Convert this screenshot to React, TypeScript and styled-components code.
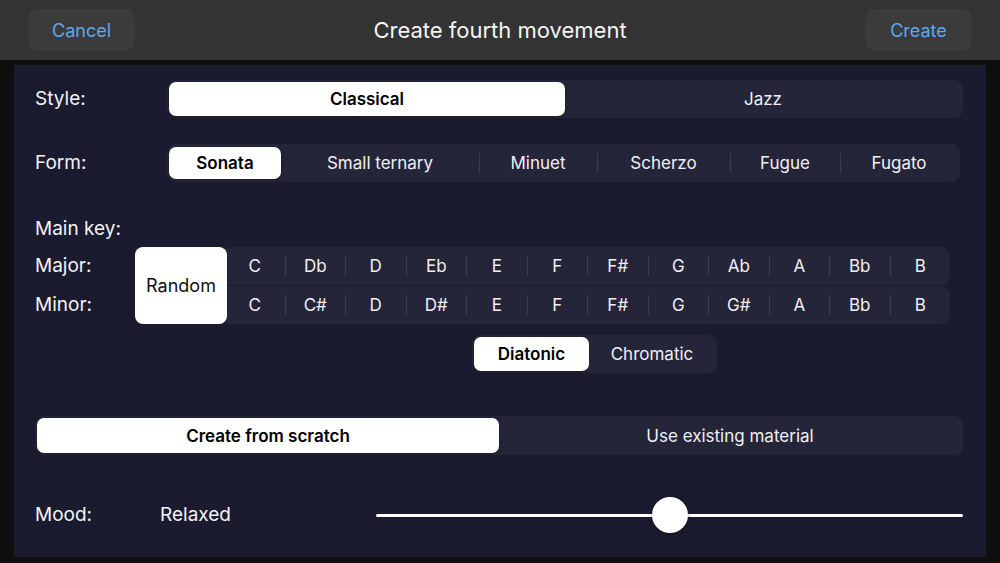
import React from 'react';
import styled, { createGlobalStyle } from 'styled-components';

const GlobalStyle = createGlobalStyle`
  html, body {
    margin: 0;
    padding: 0;
    background: #0e0e0e;
    font-family: Inter, "Noto Sans", "Liberation Sans", sans-serif;
    -webkit-font-smoothing: antialiased;
  }
`;

const forms = [
  { label: 'Sonata', width: 112 },
  { label: 'Small ternary', width: 198 },
  { label: 'Minuet', width: 118 },
  { label: 'Scherzo', width: 133 },
  { label: 'Fugue', width: 110 },
  { label: 'Fugato', width: 118 },
];
const majorKeys = ['C', 'Db', 'D', 'Eb', 'E', 'F', 'F#', 'G', 'Ab', 'A', 'Bb', 'B'];
const minorKeys = ['C', 'C#', 'D', 'D#', 'E', 'F', 'F#', 'G', 'G#', 'A', 'Bb', 'B'];

export default function App() {
  return (
    <Screen>
      <GlobalStyle />
      <NavBar>
        <NavButton>Cancel</NavButton>
        <Title>Create fourth movement</Title>
        <NavButton>Create</NavButton>
      </NavBar>
      <Panel>
        <Row>
          <Label>Style:</Label>
          <Segmented>
            <Segment $selected $grow>Classical</Segment>
            <Segment $grow>Jazz</Segment>
          </Segmented>
        </Row>

        <FormRow>
          <Label>Form:</Label>
          <Segmented $inset={3}>
            {forms.map((f, i) => (
              <Segment
                key={f.label}
                $selected={i === 0}
                $divider={i > 1}
                style={{ width: f.width }}
              >
                {f.label}
              </Segment>
            ))}
          </Segmented>
        </FormRow>

        <KeyTitle>Main key:</KeyTitle>
        <KeyGrid>
          <KeyLabels>
            <Label>Major:</Label>
            <Label>Minor:</Label>
          </KeyLabels>
          <RandomButton>Random</RandomButton>
          <KeyRows>
            <KeyBar>
              {majorKeys.map((k, i) => (
                <KeyCell key={i} $divider={i > 0}>{k}</KeyCell>
              ))}
            </KeyBar>
            <KeyBar>
              {minorKeys.map((k, i) => (
                <KeyCell key={i} $divider={i > 0}>{k}</KeyCell>
              ))}
            </KeyBar>
          </KeyRows>
        </KeyGrid>

        <ScaleRow>
          <Segmented>
            <Segment $selected style={{ width: 115 }}>Diatonic</Segment>
            <Segment style={{ width: 126 }}>Chromatic</Segment>
          </Segmented>
        </ScaleRow>

        <SourceRow>
          <Segmented>
            <Segment $selected $grow>Create from scratch</Segment>
            <Segment $grow>Use existing material</Segment>
          </Segmented>
        </SourceRow>

        <MoodRow>
          <Label>Mood:</Label>
          <Label>Relaxed</Label>
          <Slider>
            <Track />
            <Thumb style={{ left: '50%' }} />
          </Slider>
        </MoodRow>
      </Panel>
    </Screen>
  );
}

const Screen = styled.div`
  width: 1000px;
  height: 563px;
  display: flex;
  flex-direction: column;
  background: #0e0e0e;
  overflow: hidden;
`;

const NavBar = styled.header`
  height: 60px;
  flex-shrink: 0;
  background: #333333;
  display: flex;
  align-items: center;
  justify-content: space-between;
  padding: 0 28px;
  box-sizing: border-box;
`;

const NavButton = styled.button`
  width: 107px;
  height: 42px;
  border: none;
  border-radius: 10px;
  background: #3b3b3b;
  color: #5ea8ee;
  font-family: inherit;
  font-size: 18px;
  padding: 0;
`;

const Title = styled.h1`
  margin: 0;
  font-size: 22px;
  font-weight: 400;
  color: #f4f4f4;
`;

const Panel = styled.main`
  margin: 5px 14px 6px;
  flex: 1;
  background: #1b1b2f;
  display: flex;
  flex-direction: column;
  padding: 15px 23px 0 21px;
`;

const Row = styled.div`
  display: grid;
  grid-template-columns: 132px 1fr;
  align-items: center;
`;

const FormRow = styled(Row)`
  margin-top: 26px;
  padding-right: 3px;
`;

const Label = styled.span`
  color: #f2f2f4;
  font-size: 19px;
  line-height: 24px;
`;

const Segmented = styled.div<{ $inset?: number }>`
  display: flex;
  height: 38px;
  padding: ${(p) => p.$inset ?? 2}px 2px;
  box-sizing: border-box;
  background: #25253a;
  border-radius: 9px;
`;

const Segment = styled.div<{ $selected?: boolean; $grow?: boolean; $divider?: boolean }>`
  flex: ${(p) => (p.$grow ? '1 1 0' : 'none')};
  display: flex;
  align-items: center;
  justify-content: center;
  position: relative;
  border-radius: 7px;
  font-size: 17px;
  font-weight: ${(p) => (p.$selected ? 600 : 400)};
  color: ${(p) => (p.$selected ? '#000' : '#f0f0f2')};
  background: ${(p) => (p.$selected ? '#fff' : 'transparent')};
  box-shadow: ${(p) => (p.$selected ? '0 1px 3px rgba(0,0,0,0.35)' : 'none')};

  &::before {
    content: '';
    display: ${(p) => (p.$divider ? 'block' : 'none')};
    position: absolute;
    left: 0;
    top: 50%;
    height: 20px;
    margin-top: -10px;
    width: 1px;
    background: #3b3b52;
  }
`;

const KeyTitle = styled(Label)`
  margin-top: 35px;
`;

const KeyGrid = styled.div`
  display: grid;
  grid-template-columns: 100px 92px 723px;
  margin-top: 6px;
  height: 77px;
`;

const KeyLabels = styled.div`
  display: flex;
  flex-direction: column;
  justify-content: space-around;
`;

const RandomButton = styled.div`
  background: #fff;
  border-radius: 8px;
  display: flex;
  align-items: center;
  justify-content: center;
  color: #111;
  font-size: 18px;
  position: relative;
  z-index: 1;
`;

const KeyRows = styled.div`
  display: flex;
  flex-direction: column;
  gap: 1px;
  margin-left: -6px;
`;

const KeyBar = styled.div`
  flex: 1;
  display: grid;
  grid-template-columns: repeat(12, 1fr);
  padding-left: 3px;
  background: #25253a;
  border-radius: 9px;
`;

const KeyCell = styled.div<{ $divider?: boolean }>`
  display: flex;
  align-items: center;
  justify-content: center;
  color: #f0f0f2;
  font-size: 17px;
  border-left: 1px solid ${(p) => (p.$divider ? '#3b3b52' : 'transparent')};
  margin: 9px 0;
`;

const ScaleRow = styled.div`
  display: flex;
  margin-top: 11px;
  padding-left: 437px;
  height: 39px;
`;

const SourceRow = styled.div`
  margin-top: 42px;
  display: flex;
  flex-direction: column;
  & > div {
    height: 39px;
  }
`;

const MoodRow = styled.div`
  display: grid;
  grid-template-columns: 125px 216px 1fr;
  align-items: center;
  margin-top: 41px;
  height: 38px;
`;

const Slider = styled.div`
  position: relative;
  height: 38px;
  display: flex;
  align-items: center;
`;

const Track = styled.div`
  width: 100%;
  height: 3px;
  border-radius: 2px;
  background: #ffffff;
`;

const Thumb = styled.div`
  position: absolute;
  top: 1px;
  width: 36px;
  height: 36px;
  margin-left: -18px;
  border-radius: 50%;
  background: #fff;
  box-shadow: 0 2px 4px rgba(0, 0, 0, 0.3);
`;
